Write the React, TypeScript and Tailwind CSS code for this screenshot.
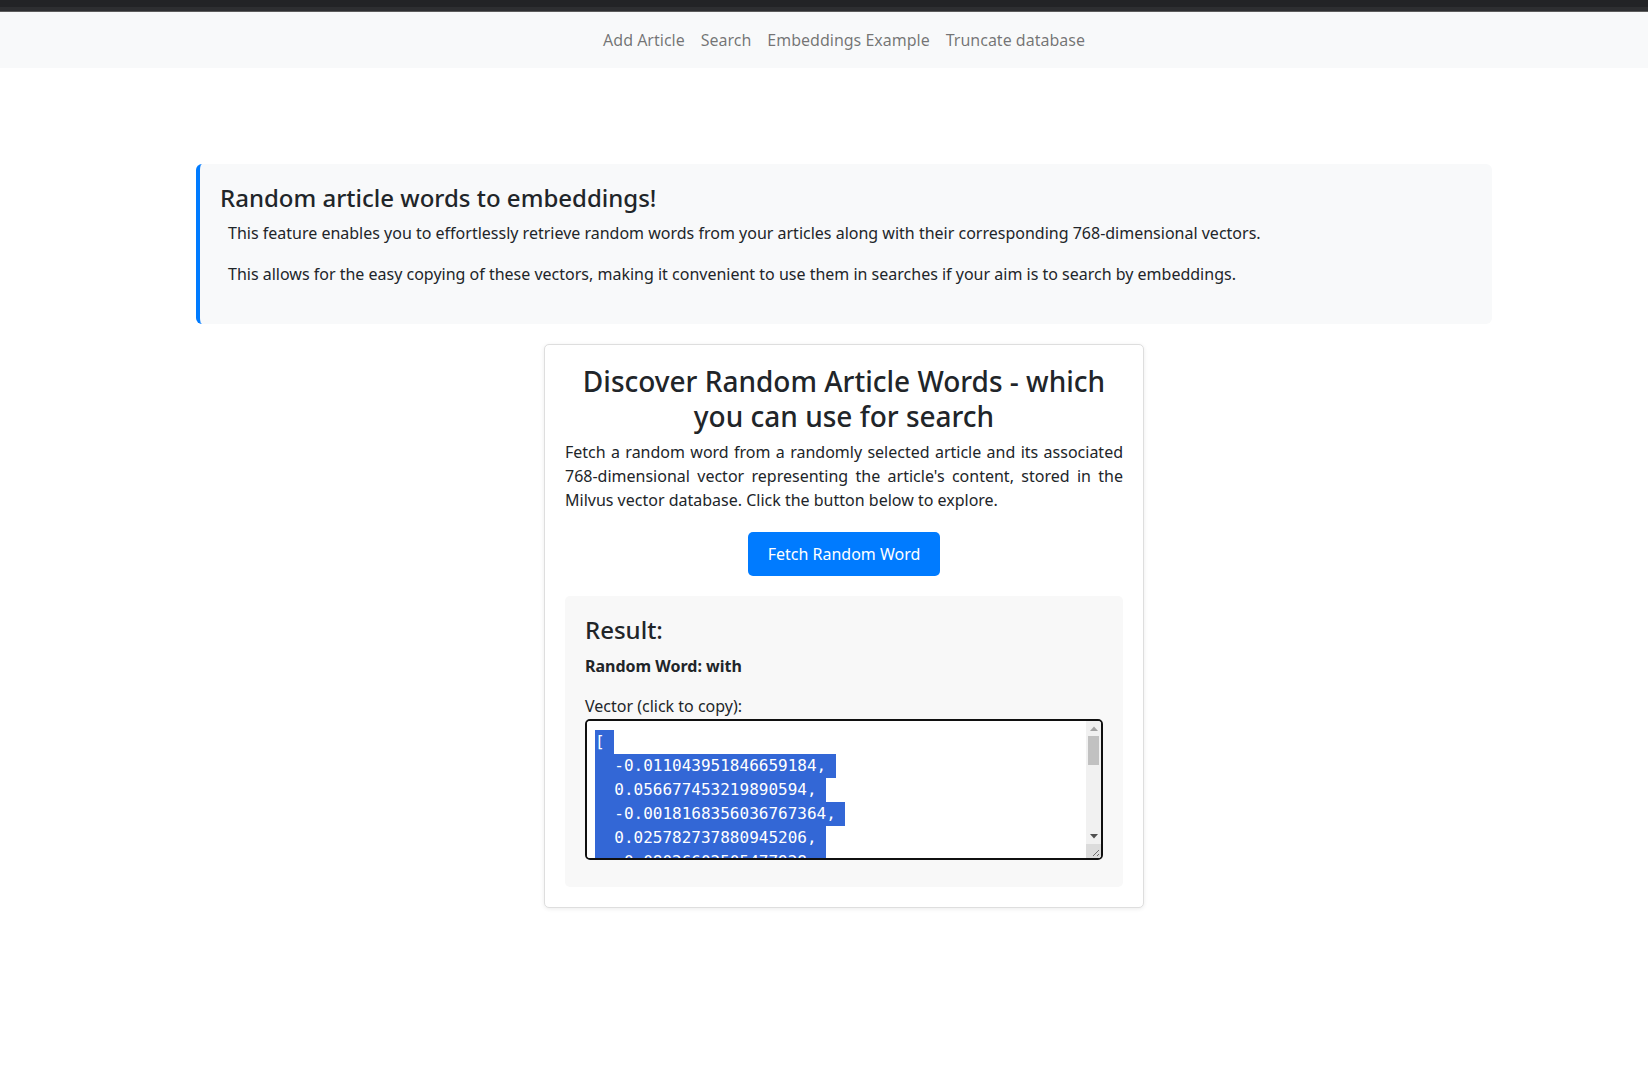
import { useEffect, useRef } from 'react';

const navLinks = ['Add Article', 'Search', 'Embeddings Example', 'Truncate database'];

// a deterministic stand-in for the 768-dimensional vector
function makeVector() {
  const head = [
    -0.011043951846659184,
    0.056677453219890594,
    -0.0018168356036767364,
    0.025782737880945206,
    -0.08026602505477929,
  ];
  const out: string[] = head.map((v) => String(v));
  let seed = 12345;
  while (out.length < 768) {
    seed = (seed * 1103515245 + 12345) % 2147483648;
    const v = ((seed / 2147483648) - 0.5) * 0.16;
    out.push(v.toFixed(18).replace(/0+$/, ''));
  }
  return '[\n' + out.map((v) => '  ' + v).join(',\n') + '\n]';
}

const vectorText = makeVector();

export default function App() {
  const areaRef = useRef<HTMLTextAreaElement>(null);

  useEffect(() => {
    const el = areaRef.current;
    if (el) {
      el.focus();
      el.select();
      el.scrollTop = 0;
    }
  }, []);

  return (
    <div className="min-h-screen bg-white text-[#212529] font-['Noto_Sans',sans-serif]">
      {/* top bar */}
      <div className="h-[7px] bg-[#222326]"></div>
      <div className="h-[4px] bg-[#2d2e31]"></div>
      <div className="h-px bg-[#5c5c5c]"></div>

      {/* navigation */}
      <nav className="bg-[#f8f9fa] py-2 pl-[40px]">
        <div className="flex justify-center">
          {navLinks.map((link) => (
            <a key={link} href="#" className="px-2 py-2 text-base leading-6 text-[rgba(0,0,0,0.55)]">
              {link}
            </a>
          ))}
        </div>
      </nav>

      <div className="pl-[40px] pt-[96px] pb-20">
        <div className="mx-auto w-[1296px]">
          {/* callout */}
          <div className="bg-[#f8f9fa] border-l-4 border-[#007bff] rounded-[6px] px-5 pt-5 pb-[22px]">
            <h4 className="text-2xl font-medium leading-[1.2] mb-2">Random article words to embeddings!</h4>
            <p className="px-2 mb-[17px] text-base leading-6">
              This feature enables you to effortlessly retrieve random words from your articles along with their corresponding 768-dimensional vectors.
            </p>
            <p className="px-2 mb-4 text-base leading-6">
              This allows for the easy copying of these vectors, making it convenient to use them in searches if your aim is to search by embeddings.
            </p>
          </div>

          {/* card */}
          <div className="mx-auto mt-5 w-[600px] bg-white border border-[#dedede] rounded-[5px] shadow-[0_1px_4px_rgba(0,0,0,0.08)] px-5 pt-[19px] pb-5">
            <h3 className="text-[28px] font-medium leading-[35px] text-center mb-[6px]">
              Discover Random Article Words - which you can use for search
            </h3>
            <p className="text-base leading-6 text-justify mb-5">
              Fetch a random word from a randomly selected article and its associated 768-dimensional vector representing the article's content, stored in the Milvus vector database. Click the button below to explore.
            </p>
            <div className="flex justify-center mb-5">
              <button className="h-[44px] px-5 bg-[#007bff] text-white text-base rounded-[5px]">
                Fetch Random Word
              </button>
            </div>

            {/* result */}
            <div className="bg-[#f8f8f8] rounded-[5px] p-5">
              <h4 className="text-2xl font-medium leading-[1.2] mb-[9px]">Result:</h4>
              <p className="font-bold text-base leading-6 mb-4">Random Word: with</p>
              <label className="block text-base leading-6 mb-px">Vector (click to copy):</label>
              <div className="flex h-[141px] mb-[7px] border-2 border-[#101010] rounded-[5px] bg-white overflow-hidden">
                <textarea
                  ref={areaRef}
                  readOnly
                  value={vectorText}
                  className="flex-1 min-w-0 h-full resize-none bg-white px-2 py-[9px] font-['DejaVu_Sans_Mono',monospace] text-base leading-6 outline-none overflow-hidden selection:bg-[#3367d6] selection:text-white"
                />
                {/* scrollbar */}
                <div className="w-[15px] flex flex-col bg-[#f1f1f1]">
                  <div className="h-[15px] flex items-center justify-center">
                    <svg width="8" height="5" viewBox="0 0 8 5">
                      <path d="M0 5 L4 0.5 L8 5 Z" fill="#a3a3a3" />
                    </svg>
                  </div>
                  <div className="h-[29px] mx-[2px] bg-[#c1c1c1]"></div>
                  <div className="flex-1"></div>
                  <div className="h-[15px] flex items-center justify-center">
                    <svg width="8" height="5" viewBox="0 0 8 5">
                      <path d="M0 0 L8 0 L4 4.5 Z" fill="#505050" />
                    </svg>
                  </div>
                  <div className="h-[14px] bg-[#dcdcdc] flex items-end justify-end">
                    <svg width="14" height="14" viewBox="0 0 14 14">
                      <path d="M12 6 L6 12 M12 10 L10 12" stroke="#6e6e6e" strokeWidth="1" />
                    </svg>
                  </div>
                </div>
              </div>
            </div>
          </div>
        </div>
      </div>
    </div>
  );
}
